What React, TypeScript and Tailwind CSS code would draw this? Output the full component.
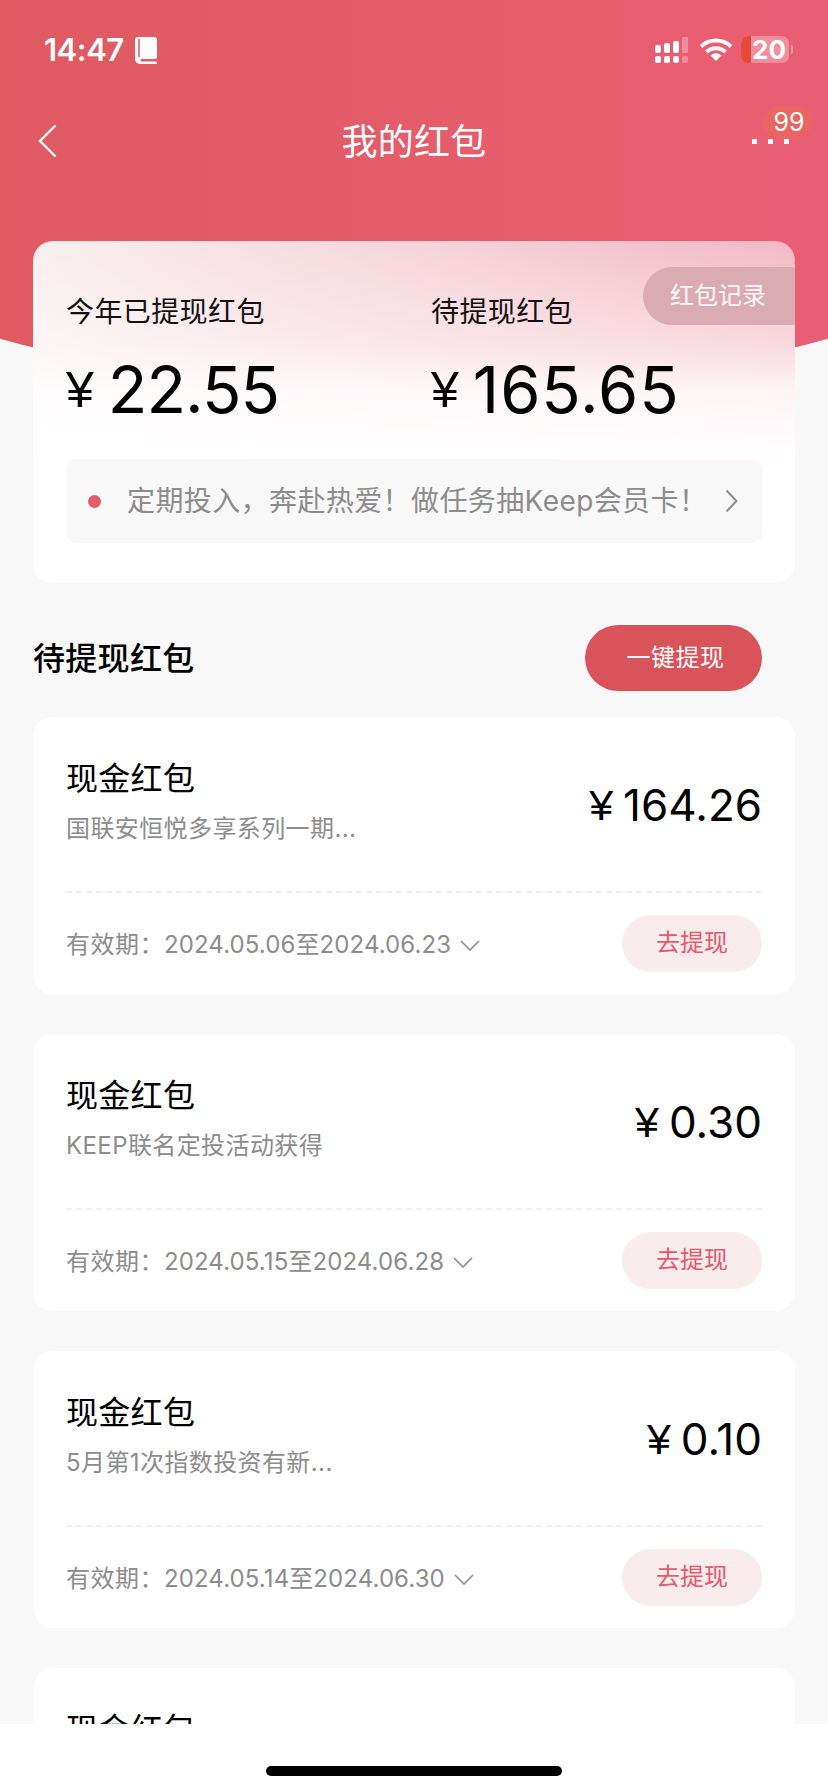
import React from 'react';

const packets = [
    { sub: '国联安恒悦多享系列一期...', amount: '164.26', start: '2024.05.06', end: '2024.06.23' },
    { sub: 'KEEP联名定投活动获得', amount: '0.30', start: '2024.05.15', end: '2024.06.28' },
    { sub: '5月第1次指数投资有新...', amount: '0.10', start: '2024.05.14', end: '2024.06.30' },
];

const StatusBar = () => (
    <div className="flex h-[100px] items-start justify-between pl-[44px] pr-[35px] pt-[34px] text-white">
        <div className="flex items-center gap-[11px]">
            <span className="text-[31px] leading-[32px] font-semibold tracking-[-0.5px]">14:47</span>
            <svg width="22" height="27" viewBox="0 0 22 27" className="mt-[1px]">
                <path d="M3 0h16a3 3 0 0 1 3 3v17a2 2 0 0 1-2 2H6a2 2 0 0 0 0 2.4h15c1 0 1 2.6 0 2.6H5a5 5 0 0 1-5-5V3a3 3 0 0 1 3-3z" fill="#fff" />
                <rect x="3.2" y="2" width="1.6" height="18" fill="#e35c66" />
            </svg>
        </div>
        <div className="flex items-start">
            <svg width="33" height="26" viewBox="0 0 33 26" className="mt-[3px]" fill="#fff">
                <rect x="0" y="8" width="6" height="8" rx="2" />
                <rect x="9" y="6" width="6" height="10" rx="2" />
                <rect x="18" y="4" width="6" height="12" rx="2" />
                <rect x="27" y="0" width="6" height="16" rx="1" opacity="0.3" />
                <rect x="0" y="19" width="6" height="7" rx="2" />
                <rect x="9" y="19" width="6" height="7" rx="2" />
                <rect x="18" y="19" width="6" height="7" rx="2" />
                <rect x="27" y="19" width="6" height="7" rx="2" opacity="0.3" />
            </svg>
            <svg width="32" height="24" viewBox="0 0 32 24" className="ml-[12px] mt-[3px]" fill="none" stroke="#fff" strokeWidth="4">
                <path d="M1 9.5a22 22 0 0 1 30 0" />
                <path d="M6.5 15a14 14 0 0 1 19 0" />
                <path d="M16 24l-5.5-5.5a8 8 0 0 1 11 0z" fill="#fff" stroke="none" />
            </svg>
            <div className="relative ml-[9px] mt-[2px] flex h-[27px] w-[48px] rounded-[7px] bg-white/30">
                <div className="h-full w-[10px] rounded-l-[7px] bg-[#e6493a]" />
                <span className="ml-[1px] text-[26px] leading-[27px] font-bold">20</span>
            </div>
            <div className="ml-[2px] mt-[11px] h-[9px] w-[2px] rounded-r-full bg-white/40" />
        </div>
    </div>
);

const NavBar = () => (
    <div className="relative flex h-[80px] items-center justify-center text-white">
        <svg width="19" height="34" viewBox="0 0 19 34" className="absolute left-[38px] top-[24px]" fill="none" stroke="#fff" strokeWidth="2.4">
            <path d="M17.5 1.5L2 17l15.5 15.5" />
        </svg>
        <span className="pt-[3px] text-[36px] leading-[48px] tracking-[0.3px]">我的红包</span>
        <div className="absolute left-[752px] top-[39px] flex gap-[11px]">
            <div className="h-[5px] w-[5px] bg-white" />
            <div className="h-[5px] w-[5px] bg-white" />
            <div className="h-[5px] w-[5px] bg-white" />
        </div>
        <div className="absolute left-[763px] top-[6px] flex h-[32px] w-[49px] items-center justify-center rounded-full bg-[#e96660] pl-[3px] pt-[1px] text-[25px] leading-none">99</div>
    </div>
);

const Chevron = () => (
    <svg width="20" height="11" viewBox="0 0 20 11" fill="none" stroke="#8c8c8c" strokeWidth="1.6">
        <path d="M1 1l9 9 9-9" />
    </svg>
);

const PacketCard = ({ sub, amount, start, end }: { sub: string; amount: string; start: string; end: string }) => (
    <div className="h-[277px] rounded-[20px] bg-white px-[33px]">
        <div className="flex h-[176px] items-start justify-between border-b-2 border-dashed border-[#f0f0f0] pt-[40px]">
            <div>
                <div className="text-[32px] leading-[44px] tracking-[0.3px] text-black">现金红包</div>
                <div className="mt-[12px] text-[24px] leading-[32px] tracking-[0.4px] text-[#8c8c8c]">{sub}</div>
            </div>
            <div className="mt-[20px] flex items-center gap-[10px] text-[44px] leading-[56px] text-black">
                <span className="font-['Liberation_Sans'] text-[43px]">¥</span>
                <span>{amount}</span>
            </div>
        </div>
        <div className="flex h-[100px] items-center justify-between">
            <div className="flex items-center pt-[4px] text-[24px] text-[#8c8c8c]">
                <span className="tracking-[0.5px]">有效期：</span>
                <span className="tracking-[0.1px]">{start}至{end}</span>
                <span className="ml-[9px]"><Chevron /></span>
            </div>
            <button className="h-[57px] w-[140px] rounded-full bg-[#f8ecec] text-[24px] text-[#e8576a]">去提现</button>
        </div>
    </div>
);

export default function App() {
    return (
        <div className="relative h-[1792px] w-[828px] overflow-hidden bg-[#f8f8f8] font-['Inter','Noto_Sans_CJK_SC',sans-serif]">
            <div className="absolute left-0 top-0 h-[400px] w-full bg-[linear-gradient(90deg,#df5a61,#ea5e73)] [clip-path:circle(1550px_at_414px_-1155px)]" />

            <div className="relative">
                <StatusBar />
                <NavBar />

                <div className="px-[33px] pt-[61px]">
                    <div className="relative h-[342px] rounded-[20px] bg-[linear-gradient(180deg,rgba(255,255,255,0)_0%,rgba(255,255,255,0.45)_100px,rgba(255,255,255,0.85)_150px,#fff_225px),linear-gradient(100deg,#f9efef_0%,#f2b4c1_100%)] px-[33px] pt-[51px]">
                        <div className="absolute right-0 top-[26px] flex h-[58px] w-[152px] items-center rounded-l-full bg-[#dbabb4] pl-[27px] text-[24px] text-white/90">红包记录</div>
                        <div className="flex">
                            <div className="w-[365px]">
                                <div className="text-[28px] leading-[40px] tracking-[0.4px] text-[#111]">今年已提现红包</div>
                                <div className="mt-[20px] flex h-[76px] items-center gap-[14px] text-black">
                                    <span className="font-['Liberation_Sans'] text-[50px]">¥</span>
                                    <span className="text-[65px] tracking-[-1px]">22.55</span>
                                </div>
                            </div>
                            <div>
                                <div className="text-[28px] leading-[40px] tracking-[0.4px] text-[#111]">待提现红包</div>
                                <div className="mt-[20px] flex h-[76px] items-center gap-[14px] text-black">
                                    <span className="font-['Liberation_Sans'] text-[50px]">¥</span>
                                    <span className="text-[65px] tracking-[0.9px]">165.65</span>
                                </div>
                            </div>
                        </div>
                        <div className="mt-[31px] flex h-[84px] items-center rounded-[10px] bg-[#f8f8f8] pl-[22px] pr-[24px] text-[#8c8c8c]">
                            <div className="h-[13px] w-[13px] rounded-full bg-[#e35c66]" />
                            <span className="ml-[26px] flex-1 text-[28px] tracking-[0.4px]">定期投入，奔赴热爱！做任务抽Keep会员卡！</span>
                            <svg width="13" height="24" viewBox="0 0 13 24" fill="none" stroke="#8c8c8c" strokeWidth="2">
                                <path d="M1.5 1.5L11.5 12 1.5 22.5" />
                            </svg>
                        </div>
                    </div>

                    <div className="mt-[42px] flex h-[66px] items-center justify-between pr-[33px]">
                        <span className="pt-[2px] text-[32px] font-medium tracking-[0.3px] text-black">待提现红包</span>
                        <button className="h-[66px] w-[177px] rounded-full bg-[#d9535b] pl-[4px] text-[24px] tracking-[0.5px] text-white">一键提现</button>
                    </div>

                    <div className="mt-[26px] flex flex-col gap-[40px]">
                        {packets.map((p) => (
                            <PacketCard key={p.start} {...p} />
                        ))}
                        <div className="h-[277px] rounded-[20px] bg-white px-[33px] pt-[40px]">
                            <div className="text-[32px] leading-[44px] tracking-[0.3px] text-black">现金红包</div>
                        </div>
                    </div>
                </div>
            </div>

            <div className="absolute bottom-0 left-0 flex h-[68px] w-full justify-center bg-white pt-[42px]">
                <div className="h-[10px] w-[296px] rounded-full bg-black" />
            </div>
        </div>
    );
}
